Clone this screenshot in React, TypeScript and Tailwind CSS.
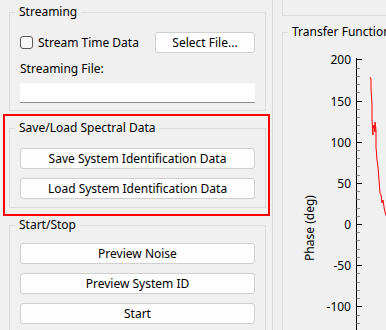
import React from 'react';

const Button = ({ label, className = '' }: { label: string; className?: string }) => (
  <button className={`h-[21px] rounded-[3px] border border-[#d0d0d0] bg-[#fdfdfd] text-[12px] leading-[16px] text-black ${className}`}>
    {label}
  </button>
);

const Group = ({ title, className = '', children }: { title: string; className?: string; children: React.ReactNode }) => (
  <fieldset className={`border border-[#dcdcdc] px-[10px] ${className}`}>
    <legend className="ml-[-5px] px-[4px] text-[12px] leading-[16px] text-black">{title}</legend>
    {children}
  </fieldset>
);

// phase trace, page coords shifted by the chart origin (283, 40)
const trace = [
  [370, 77], [371, 79], [371, 88], [372, 105], [372, 120], [373, 135], [373, 128], [374, 125],
  [375, 132], [375, 122], [376, 130], [376, 147], [377, 160], [378, 167], [379, 180], [380, 193],
  [381, 195], [382, 203], [383, 200], [384, 207], [385, 212], [386, 215], [388, 220],
]
  .map(([x, y]) => `${x - 283},${y - 40}`)
  .join(' ');

const ticks = Array.from({ length: 34 }, (_, i) => 200 - i * 10);

const PhaseChart = () => (
  <svg width="110" height="290" className="ml-[-10px] block">
    <line x1="73.5" y1="18" x2="73.5" y2="290" stroke="#000" />
    {ticks.map((v) => {
      const y = Math.round(184 - 0.823 * v) + 0.5;
      const major = v % 50 === 0;
      return (
        <g key={v}>
          <line x1="73.5" y1={y} x2={major ? 79 : 77} y2={y} stroke={major ? '#000' : '#8a8a8a'} />
          {major && (
            <text x="68" y={y + 4} textAnchor="end" fontSize="12" fill="#000" fontFamily="Noto Sans, sans-serif">
              {v}
            </text>
          )}
        </g>
      );
    })}
    <text
      x="0"
      y="0"
      transform="translate(31 188) rotate(-90)"
      textAnchor="middle"
      fontSize="12"
      fill="#000"
      fontFamily="Noto Sans, sans-serif"
    >
      Phase (deg)
    </text>
    <polyline points={trace} fill="none" stroke="#ff0000" strokeWidth="1" />
  </svg>
);

export default function App() {
  return (
    <div className="flex h-[330px] w-[386px] overflow-hidden bg-[#f0f0f0] font-['Noto_Sans',sans-serif] text-[12px] leading-[16px] text-black">
      {/* Left column */}
      <div className="h-full w-[273px] shrink-0 overflow-hidden border-r border-[#dadada] pt-[4px]">
        <Group title="Streaming" className="ml-[9px] w-[257px] pb-[7px]">
          <div className="mt-[12px] flex items-center justify-between">
            <label className="flex items-center gap-[5px]">
              <span className="h-[13px] w-[13px] rounded-[3px] border border-[#5a5a5a] bg-[#f7f7f7]" />
              <span>Stream Time Data</span>
            </label>
            <Button label="Select File..." className="w-[100px]" />
          </div>
          <div className="mt-[8px]">Streaming File:</div>
          <div className="mt-[6px] h-[20px] w-full border-b border-[#8a8a8a] bg-white" />
        </Group>

        <div className="ml-[3px] mt-[3px] w-[267px] border-2 border-[#ff0000] pb-[6px] pl-[4px] pt-[4px]">
          <Group title="Save/Load Spectral Data" className="w-[257px] pb-[8px]">
            <div className="mt-[12px] flex flex-col gap-[9px]">
              <Button label="Save System Identification Data" className="w-full" />
              <Button label="Load System Identification Data" className="w-full" />
            </div>
          </Group>
        </div>

        <Group title="Start/Stop" className="ml-[9px] mt-[1px] w-[257px] pb-[10px]">
          <div className="mt-[10px] flex flex-col gap-[9px]">
            <Button label="Preview Noise" className="w-full" />
            <Button label="Preview System ID" className="w-full" />
            <Button label="Start" className="w-full" />
          </div>
        </Group>
      </div>

      {/* Right column */}
      <div className="h-full flex-1 overflow-hidden pl-[9px]">
        <div className="h-[16px] w-[300px] border-x border-b border-[#dcdcdc]" />
        <Group title="Transfer Function (Phase)" className="mt-[8px] h-[400px] w-[300px]">
          <PhaseChart />
        </Group>
      </div>
    </div>
  );
}
